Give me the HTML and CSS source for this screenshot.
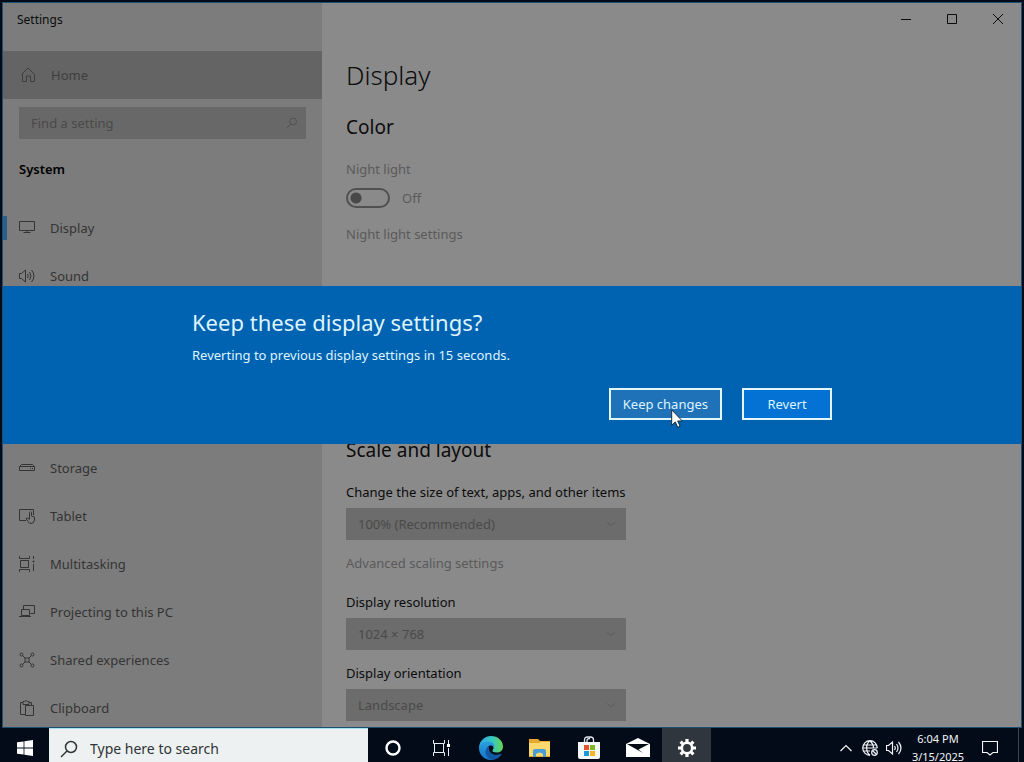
FILE: index.html
```html
<!DOCTYPE html>
<html lang="en">
<head>
    <meta charset="UTF-8">
    <meta name="viewport" content="width=device-width, initial-scale=1.0">
    <title>Settings</title>
    <link rel="stylesheet" href="styles.css">
</head>
<body>
    <div class="window">
        <aside class="sidebar">
            <div class="window-title">Settings</div>
            <button class="home" type="button">
                <svg class="icon" viewBox="0 0 16 16"><path d="M1.500 7.500 8 1l6.500 6.500V14.500h-4V9h-4v5.500h-4V7"/></svg>
                Home
            </button>
            <div class="search">
                <input type="text" placeholder="Find a setting" aria-label="Find a setting" disabled>
                <svg class="icon small" viewBox="0 0 16 16"><circle cx="9.500" cy="6" r="4.500"/><path d="M6.500 9.500 1 15"/></svg>
            </div>
            <h2 class="section">System</h2>
            <nav>
                <ul class="nav">
                    <li><a class="active" href="#display">
                        <svg class="icon" viewBox="0 0 16 16"><path d="M.5 1.500h15v9H.5zM8 10.500v2M4.500 12.500h7"/></svg>Display</a></li>
                    <li><a href="#sound">
                        <svg class="icon" viewBox="0 0 16 16"><path d="M.5 5.500h2l4-3.500v12l-4-3.500h-2zM8.500 6q1.500 2 0 4M10.500 4q3 4 0 8M12.500 2q5 6 0 12"/></svg>Sound</a></li>
                </ul>
                <ul class="nav nav-more">
                    <li><a href="#storage">
                        <svg class="icon" viewBox="0 0 16 16"><path d="M2.500 4.500h11l2 2v4H.5v-4zM.5 6.500h15M11 8.500h1M13 8.500h1"/></svg>Storage</a></li>
                    <li><a href="#tablet">
                        <svg class="icon" viewBox="0 0 16 16"><path d="M7 12.500H.5v-11h14V7M10.500 11V4.500q1-1.500 2 0V8l3 1v3q-.5 3.500-3.500 3.500-2 0-3-2L7 10.500q1.500-1.500 3.500 1"/></svg>Tablet</a></li>
                    <li><a href="#multitasking">
                        <svg class="icon" viewBox="0 0 16 16"><path d="M.5 0v2.500h10V0M1.500 4.500h8v7h-8zM.5 16v-2.500h10V16M14.500 0v3M14.500 8v7"/><path d="M14 5h1v1h-1z"/></svg>Multitasking</a></li>
                    <li><a href="#projecting">
                        <svg class="icon" viewBox="0 0 16 16"><path d="M4.500 5V1.500h11v8h-4M2.500 5.500h8v6h-8zM0 12.500h12"/></svg>Projecting to this PC</a></li>
                    <li><a href="#shared">
                        <svg class="icon" viewBox="0 0 16 16"><path d="M3.500 3.500 6 6M12.500 3.500 10 6M3.500 12.500 6 10M12.500 12.500 10 10M6 6h4v4H6z"/><circle cx="2.500" cy="2.500" r="1.500"/><circle cx="13.500" cy="2.500" r="1.500"/><circle cx="2.500" cy="13.500" r="1.500"/><circle cx="13.500" cy="13.500" r="1.500"/></svg>Shared experiences</a></li>
                    <li><a href="#clipboard">
                        <svg class="icon" viewBox="0 0 16 16"><path d="M6 14.500H1.500v-12H4M10 2.500h2.500V5M4 4.500v-3h1.500q1.500-2 3 0H10v3zM6.500 5.500h8v10h-8z"/></svg>Clipboard</a></li>
                </ul>
            </nav>
        </aside>

        <main class="content">
            <div class="window-controls">
                <button type="button" aria-label="Minimize"><svg viewBox="0 0 10 10"><path d="M0 5.500h10"/></svg></button>
                <button type="button" aria-label="Maximize"><svg viewBox="0 0 10 10"><path d="M.5.5h9v9h-9z"/></svg></button>
                <button type="button" aria-label="Close"><svg viewBox="0 0 10 10"><path d="M0 0l10 10M10 0 0 10"/></svg></button>
            </div>
            <h1>Display</h1>
            <section class="group color">
                <h2>Color</h2>
                <label class="muted" for="nightLight">Night light</label>
                <div class="toggle">
                    <input type="checkbox" id="nightLight" role="switch" disabled>
                    <span class="muted">Off</span>
                </div>
                <a class="muted" href="#night-light">Night light settings</a>
            </section>
            <section class="group scale">
                <h2>Scale and layout</h2>
                <div class="field">
                    <label for="scale">Change the size of text, apps, and other items</label>
                    <div class="select">
                        <select id="scale" disabled><option>100% (Recommended)</option></select>
                        <svg viewBox="0 0 12 12"><path d="M1 4l5 4 5-4"/></svg>
                    </div>
                </div>
                <a class="muted advanced" href="#advanced">Advanced scaling settings</a>
                <div class="field">
                    <label for="resolution">Display resolution</label>
                    <div class="select">
                        <select id="resolution" disabled><option>1024 × 768</option></select>
                        <svg viewBox="0 0 12 12"><path d="M1 4l5 4 5-4"/></svg>
                    </div>
                </div>
                <div class="field">
                    <label for="orientation">Display orientation</label>
                    <div class="select">
                        <select id="orientation" disabled><option>Landscape</option></select>
                        <svg viewBox="0 0 12 12"><path d="M1 4l5 4 5-4"/></svg>
                    </div>
                </div>
            </section>
        </main>

        <div class="dialog" role="dialog" aria-labelledby="dialogTitle">
            <div class="dialog-body">
                <h2 id="dialogTitle">Keep these display settings?</h2>
                <p>Reverting to previous display settings in 15 seconds.</p>
                <div class="dialog-actions">
                    <button class="keep" type="button">Keep changes
                        <svg class="cursor" viewBox="0 0 12 19"><path d="M.7.8v15.500l3.600-3.400 2.400 5.400 2.400-1-2.400-5.300h4.600z"/></svg>
                    </button>
                    <button type="button">Revert</button>
                </div>
            </div>
        </div>
    </div>

    <footer class="taskbar">
        <button class="start" type="button" aria-label="Start">
            <svg viewBox="0 0 16 16"><path d="M0 2.300 6.600 1.400v6.200H0zM7.400 1.300 16 0v7.600H7.400zM0 8.400h6.600v6.200L0 13.700zM7.400 8.400H16V16l-8.600-1.300z"/></svg>
        </button>
        <div class="taskbar-search">
            <svg viewBox="0 0 18 18"><circle cx="11" cy="7" r="5.500"/><path d="M7 11l-6 6"/></svg>
            <input type="text" placeholder="Type here to search" aria-label="Type here to search">
        </div>
        <div class="apps">
            <button type="button" aria-label="Cortana">
                <svg viewBox="0 0 24 24"><circle cx="12" cy="12" r="6.500" fill="none" stroke="#fff" stroke-width="2.400"/></svg>
            </button>
            <button type="button" aria-label="Task View">
                <svg viewBox="0 0 24 24"><path d="M3.500 4v3.500h11V4M4.500 7.500h9v9h-9zM3.500 20v-3.500h11V20M18.500 4v4M18.500 12v8" fill="none" stroke="#e8f0f2"/><path d="M17 8h3v3h-3z" fill="#fff"/></svg>
            </button>
            <button type="button" aria-label="Microsoft Edge">
                <svg viewBox="0 0 24 24">
                    <defs>
                        <linearGradient id="edgeTop"><stop offset="0" stop-color="#2aa5e2"/><stop offset=".55" stop-color="#38c7c0"/><stop offset="1" stop-color="#65d551"/></linearGradient>
                        <linearGradient id="edgeSide" x2="0" y2="1"><stop offset="0" stop-color="#2aa0df"/><stop offset="1" stop-color="#1672c4"/></linearGradient>
                    </defs>
                    <path d="M0 11C1 4 6 0 12 0c7 0 12 5 12 10.500 0 4-3 6-6 6-3.500 0-5-1-4.500-2 2.500-3 .5-6.500-4-6.500C5 8 1 10 0 13z" fill="url(#edgeTop)"/>
                    <path d="M0 12c.5-4 5-6.500 9.500-6.500 5 0 6.500 4 5.500 6-1-2-3-2.500-5-1.500-4 2-2 10 5 13.500-8 2-15-3.500-15-11.500z" fill="url(#edgeSide)"/>
                    <path d="M10 10.500C4 13 6 22 13.500 24 18 23.500 21 21 22.500 18.500c.3-.7-.2-1-.8-.7C16 20.500 9 17.500 10 10.500z" fill="#1159a2"/>
                </svg>
            </button>
            <button type="button" aria-label="File Explorer">
                <svg viewBox="0 0 24 24"><path d="M1 3h9l2 2h10v16H1z" fill="#e5a92d"/><path d="M1 7h10l2-1h9v14H1z" fill="#fbd96c"/><path d="M5 21v-6q0-2 2-2h9q2 0 2 2v6h-3v-3q-3.500-3-7 0v3z" fill="#4a9ed8"/></svg>
            </button>
            <button type="button" aria-label="Microsoft Store">
                <svg viewBox="0 0 24 24"><path d="M7.500 8V4q0-3 3-3h3q3 0 3 3v4M10 7V4.500q0-2 3-2" fill="none" stroke="#dce8ec" stroke-width="1.300"/><path d="M1 6h22v15q0 2-2 2H3q-2 0-2-2z" fill="#f4f7f7"/><path d="M7 9h5v5H7z" fill="#e5532d"/><path d="M13 9h5v5h-5z" fill="#7fb52b"/><path d="M7 15h5v5H7z" fill="#1c9ad6"/><path d="M13 15h5v5h-5z" fill="#f3b727"/></svg>
            </button>
            <button type="button" aria-label="Mail">
                <svg viewBox="0 0 24 24"><path d="M0 8 12 2l12 6v13H0z" fill="#fff"/><path d="M1 8h22L12.500 13.500 17 17 4.500 10z" fill="#030b15"/></svg>
            </button>
            <button class="open" type="button" aria-label="Settings">
                <svg viewBox="0 0 24 24"><g fill="none" stroke="#fff"><circle cx="12" cy="12" r="5.200" stroke-width="2.600"/><path d="M12 3v3M12 18v3M3 12h3M18 12h3M5.600 5.600l2.200 2.200M16.200 16.200l2.200 2.200M5.600 18.400l2.200-2.200M16.200 7.800l2.200-2.200" stroke-width="3.200"/></g></svg>
            </button>
        </div>
        <div class="tray">
            <button type="button" aria-label="Show hidden icons"><svg viewBox="0 0 16 16"><path d="M2.500 11 8 5.500l5.500 5.500"/></svg></button>
            <button type="button" aria-label="Network"><svg viewBox="0 0 16 16"><path d="M8 15.300C4 15.300.7 12 .7 8S4 .7 8 .7 15.300 4 15.300 8M8 .7C3.500 4 3.500 12 8 15.300M8 .7Q11.500 4 11.500 8M1.500 5h13M1.500 11H8M.7 8h14.600"/><circle cx="12.500" cy="12.500" r="2.800"/><path d="M10.500 10.500l4 4"/></svg></button>
            <button type="button" aria-label="Volume"><svg viewBox="0 0 16 16"><path d="M.5 5.500h2l4-3.500v12l-4-3.500h-2zM8.500 6q1.500 2 0 4M10.500 4q3 4 0 8M12.500 2q5 6 0 12"/></svg></button>
            <button class="clock" type="button"><span>6:04 PM</span><span>3/15/2025</span></button>
            <button class="notifications" type="button" aria-label="Notifications"><svg viewBox="0 0 16 16"><path d="M.5 1.500h15v11H11L8 15l-3-2.500H.5z"/></svg></button>
        </div>
    </footer>
</body>
</html>
```
FILE: styles.css
```css
* {
    box-sizing: border-box;
}
body {
    margin: 0;
    height: 100vh;
    overflow: hidden;
    display: flex;
    flex-direction: column;
    background-color: #030b18;
    color: #0c0c0c;
    font-family: "Noto Sans", "Open Sans", sans-serif;
    font-size: 13px;
    line-height: 20px;
}
h1, h2, p, ul {
    margin: 0;
    padding: 0;
}
button, input, select {
    font: inherit;
    color: inherit;
    border: none;
    background: none;
    padding: 0;
}
a {
    color: inherit;
    text-decoration: none;
}
svg {
    display: block;
    fill: none;
    stroke: currentColor;
}

/* Settings window */
.window {
    position: relative;
    flex: 1;
    min-height: 0;
    margin: 2px 2px 0;
    border: 1px solid #1c4f70;
    display: flex;
    overflow: hidden;
    background-color: #8a8a8a;
}
.sidebar {
    flex: 0 0 319px;
    background-color: #7c7c7c;
}
.window-title {
    height: 48px;
    padding: 7px 14px;
    font-size: 12px;
}
.icon {
    width: 16px;
    height: 16px;
    flex: none;
}
.home {
    display: flex;
    align-items: center;
    gap: 15px;
    width: 100%;
    height: 48px;
    padding: 0 17px;
    background-color: #646464;
    color: #3e3e3e;
}
.search {
    display: flex;
    align-items: center;
    height: 32px;
    margin: 8px 16px 0;
    padding: 0 8px 0 12px;
    background-color: #686868;
    color: #4a4a4a;
}
.search input {
    flex: 1;
    min-width: 0;
}
.icon.small {
    width: 12px;
    height: 12px;
}
::placeholder {
    color: inherit;
    opacity: 1;
}
.section {
    padding: 20px 16px;
    font-size: 13px;
    font-weight: 600;
    color: #000;
}
.nav {
    list-style: none;
    margin-top: 5px;
}
.nav-more {
    margin-top: 144px;
}
.nav a {
    display: flex;
    align-items: center;
    gap: 15px;
    height: 48px;
    padding: 0 16px;
    color: #343434;
}
.nav .active {
    background: linear-gradient(#2a5f8c, #2a5f8c) left / 4px 24px no-repeat;
}

/* Page content */
.content {
    flex: 1;
    min-width: 0;
    padding: 0 24px;
}
.window-controls {
    display: flex;
    justify-content: flex-end;
    margin-right: -24px;
}
.window-controls button {
    display: grid;
    place-items: center;
    width: 46px;
    height: 32px;
}
.window-controls svg {
    width: 10px;
    height: 10px;
}
h1 {
    margin-top: 22px;
    font-size: 26px;
    font-weight: 300;
    line-height: 36px;
}
.group {
    display: flex;
    flex-direction: column;
    align-items: flex-start;
}
.group h2 {
    font-size: 19px;
    font-weight: 400;
    line-height: 28px;
}
.color {
    margin-top: 20px;
}
.color h2 {
    margin-bottom: 18px;
}
.muted {
    color: #5a5a5a;
}
.toggle {
    display: flex;
    align-items: center;
    gap: 12px;
    margin: 9px 0 16px;
}
.toggle input {
    appearance: none;
    width: 44px;
    height: 20px;
    margin: 0;
    border: 2px solid #505050;
    border-radius: 10px;
    background: radial-gradient(circle at 8px 8px, #484848 5px, transparent 6px);
}
.scale {
    margin-top: 192px;
}
.scale h2 {
    margin-bottom: 18px;
}
.field {
    width: 280px;
    white-space: nowrap;
}
.field + .field {
    margin-top: 13px;
}
.advanced {
    margin: 13px 0 19px;
}
.select {
    display: grid;
    align-items: center;
    height: 32px;
    margin-top: 6px;
    background-color: #6c6c6c;
    color: #4a4a4a;
}
.select select,
.select svg {
    grid-area: 1 / 1;
}
.select select {
    appearance: none;
    height: 32px;
    padding: 0 12px;
    opacity: 1;
}
.select svg {
    justify-self: end;
    width: 10px;
    height: 10px;
    margin-right: 10px;
    color: #5a5a5a;
}

/* Confirmation banner over the window */
.dialog {
    position: absolute;
    top: 283px;
    left: 0;
    right: 0;
    padding: 20px;
    background-color: #0063b1;
    color: #def4ff;
}
.dialog-body {
    max-width: 640px;
    margin: 0 auto;
}
.dialog h2 {
    margin-bottom: 7px;
    font-size: 22px;
    font-weight: 400;
    line-height: 32px;
}
.dialog-actions {
    display: flex;
    justify-content: flex-end;
    gap: 20px;
    margin: 23px 0 4px;
}
.dialog-actions button {
    min-width: 90px;
    height: 32px;
    padding: 0 12px;
    border: 2px solid #e2f5f8;
    background-color: #0472d4;
}
.dialog-actions .keep {
    position: relative;
    background-color: #1f72b8;
}
.cursor {
    position: absolute;
    left: 60px;
    top: 19px;
    width: 12px;
    height: 19px;
    fill: #fff;
    stroke: #1a2a3a;
}

/* Taskbar, its lower edge runs below the screen */
.taskbar {
    flex: none;
    height: 34px;
    display: flex;
    align-items: flex-start;
    color: #f2f6f8;
}
.taskbar button {
    display: grid;
    place-items: center;
    height: 40px;
}
.start {
    width: 49px;
}
.start svg {
    width: 16px;
    height: 16px;
    fill: #fff;
    stroke: none;
}
.taskbar-search {
    flex: 0 1 319px;
    min-width: 0;
    display: flex;
    align-items: center;
    gap: 12px;
    height: 40px;
    padding: 0 11px;
    border-top: 1px solid #a5dff0;
    background-color: #edf1f1;
    color: #303434;
    font-size: 14px;
}
.taskbar-search svg {
    width: 18px;
    height: 18px;
    stroke-width: 1.5;
}
.taskbar-search input {
    flex: 1;
    min-width: 0;
}
.apps {
    display: flex;
}
.apps button {
    width: 49px;
}
.apps svg {
    width: 24px;
    height: 24px;
    stroke: none;
}
.apps .open {
    background-color: #30363d;
}
.tray {
    display: flex;
    margin-left: auto;
    margin-right: 5px;
    border-right: 1px solid #3a4552;
}
.tray button {
    width: 24px;
}
.tray svg {
    width: 16px;
    height: 16px;
    stroke-width: 1.2;
}
.tray .clock {
    width: 64px;
    align-content: center;
    font-size: 11px;
    line-height: 18px;
}
.tray .notifications {
    width: 40px;
    margin-right: 8px;
}
```
